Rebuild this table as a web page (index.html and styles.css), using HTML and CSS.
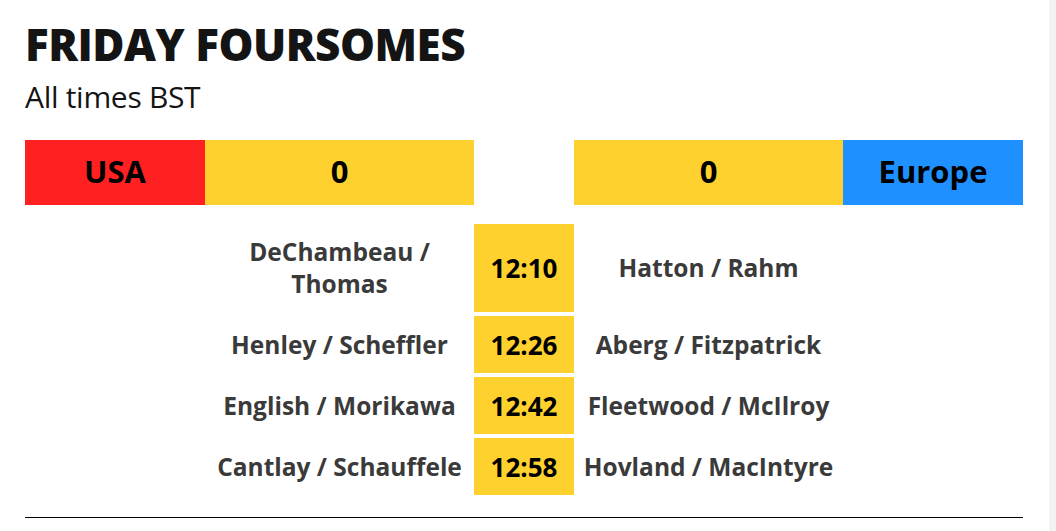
FILE: index.html
```html
<!DOCTYPE html>
<html lang="en">
<head>
<meta charset="utf-8">
<title>Friday Foursomes</title>
<link rel="stylesheet" href="styles.css">
</head>
<body>
<main class="page">
  <h1 class="title">FRIDAY FOURSOMES</h1>
  <p class="subtitle">All times BST</p>
  <div class="scorebar">
    <div class="team team-usa">USA</div>
    <div class="score">0</div>
    <div class="spacer"></div>
    <div class="score">0</div>
    <div class="team team-eur">Europe</div>
  </div>
  <div class="matches">
    <div class="match">
      <div class="pair">DeChambeau / Thomas</div>
      <div class="time">12:10</div>
      <div class="pair">Hatton / Rahm</div>
    </div>
    <div class="match">
      <div class="pair">Henley / Scheffler</div>
      <div class="time">12:26</div>
      <div class="pair">Aberg / Fitzpatrick</div>
    </div>
    <div class="match">
      <div class="pair">English / Morikawa</div>
      <div class="time">12:42</div>
      <div class="pair">Fleetwood / McIlroy</div>
    </div>
    <div class="match">
      <div class="pair">Cantlay / Schauffele</div>
      <div class="time">12:58</div>
      <div class="pair">Hovland / MacIntyre</div>
    </div>
  </div>
  <hr class="rule">
</main>
</body>
</html>
```
FILE: styles.css
```css
html, body {
  margin: 0;
  padding: 0;
  background: #ffffff;
}
body {
  min-height: 100vh;
  box-sizing: border-box;
  border-right: 7px solid #f2f2f2;
  font-family: "Open Sans", "Noto Sans", sans-serif;
  color: #141414;
}
.page {
  width: 998px;
  padding: 18px 0 0 25px;
}
.title {
  margin: 0;
  font-size: 44px;
  line-height: 52px;
  font-weight: 800;
  letter-spacing: -0.5px;
  color: #141414;
}
.subtitle {
  margin: 7px 0 0 0;
  font-size: 30px;
  line-height: 40px;
  font-weight: 400;
  letter-spacing: -0.3px;
  color: #141414;
}
.scorebar {
  display: grid;
  grid-template-columns: 180px 269px 100px 269px 180px;
  height: 65px;
  margin-top: 23px;
}
.scorebar > div {
  display: flex;
  align-items: center;
  justify-content: center;
  padding-bottom: 3px;
  font-size: 31px;
  font-weight: 700;
  color: #000;
}
.team-usa { background: #ff2121; }
.team-eur { background: #1e90ff; }
.score { background: #fed12e; }
.matches {
  display: flex;
  flex-direction: column;
  gap: 4px;
  margin-top: 19px;
  padding-left: 180px;
}
.match {
  display: grid;
  grid-template-columns: 269px 100px 269px;
  min-height: 57px;
}
.pair {
  display: flex;
  align-items: center;
  justify-content: center;
  text-align: center;
  padding: 12px 8px;
  font-size: 24.5px;
  line-height: 32px;
  font-weight: 700;
  color: #3a3a3a;
}
.time {
  display: flex;
  align-items: center;
  justify-content: center;
  background: #fed12e;
  font-size: 26px;
  font-weight: 700;
  color: #000;
}
.rule {
  margin: 22px 0 0 0;
  border: 0;
  border-top: 1px solid #000;
  height: 0;
}
```
